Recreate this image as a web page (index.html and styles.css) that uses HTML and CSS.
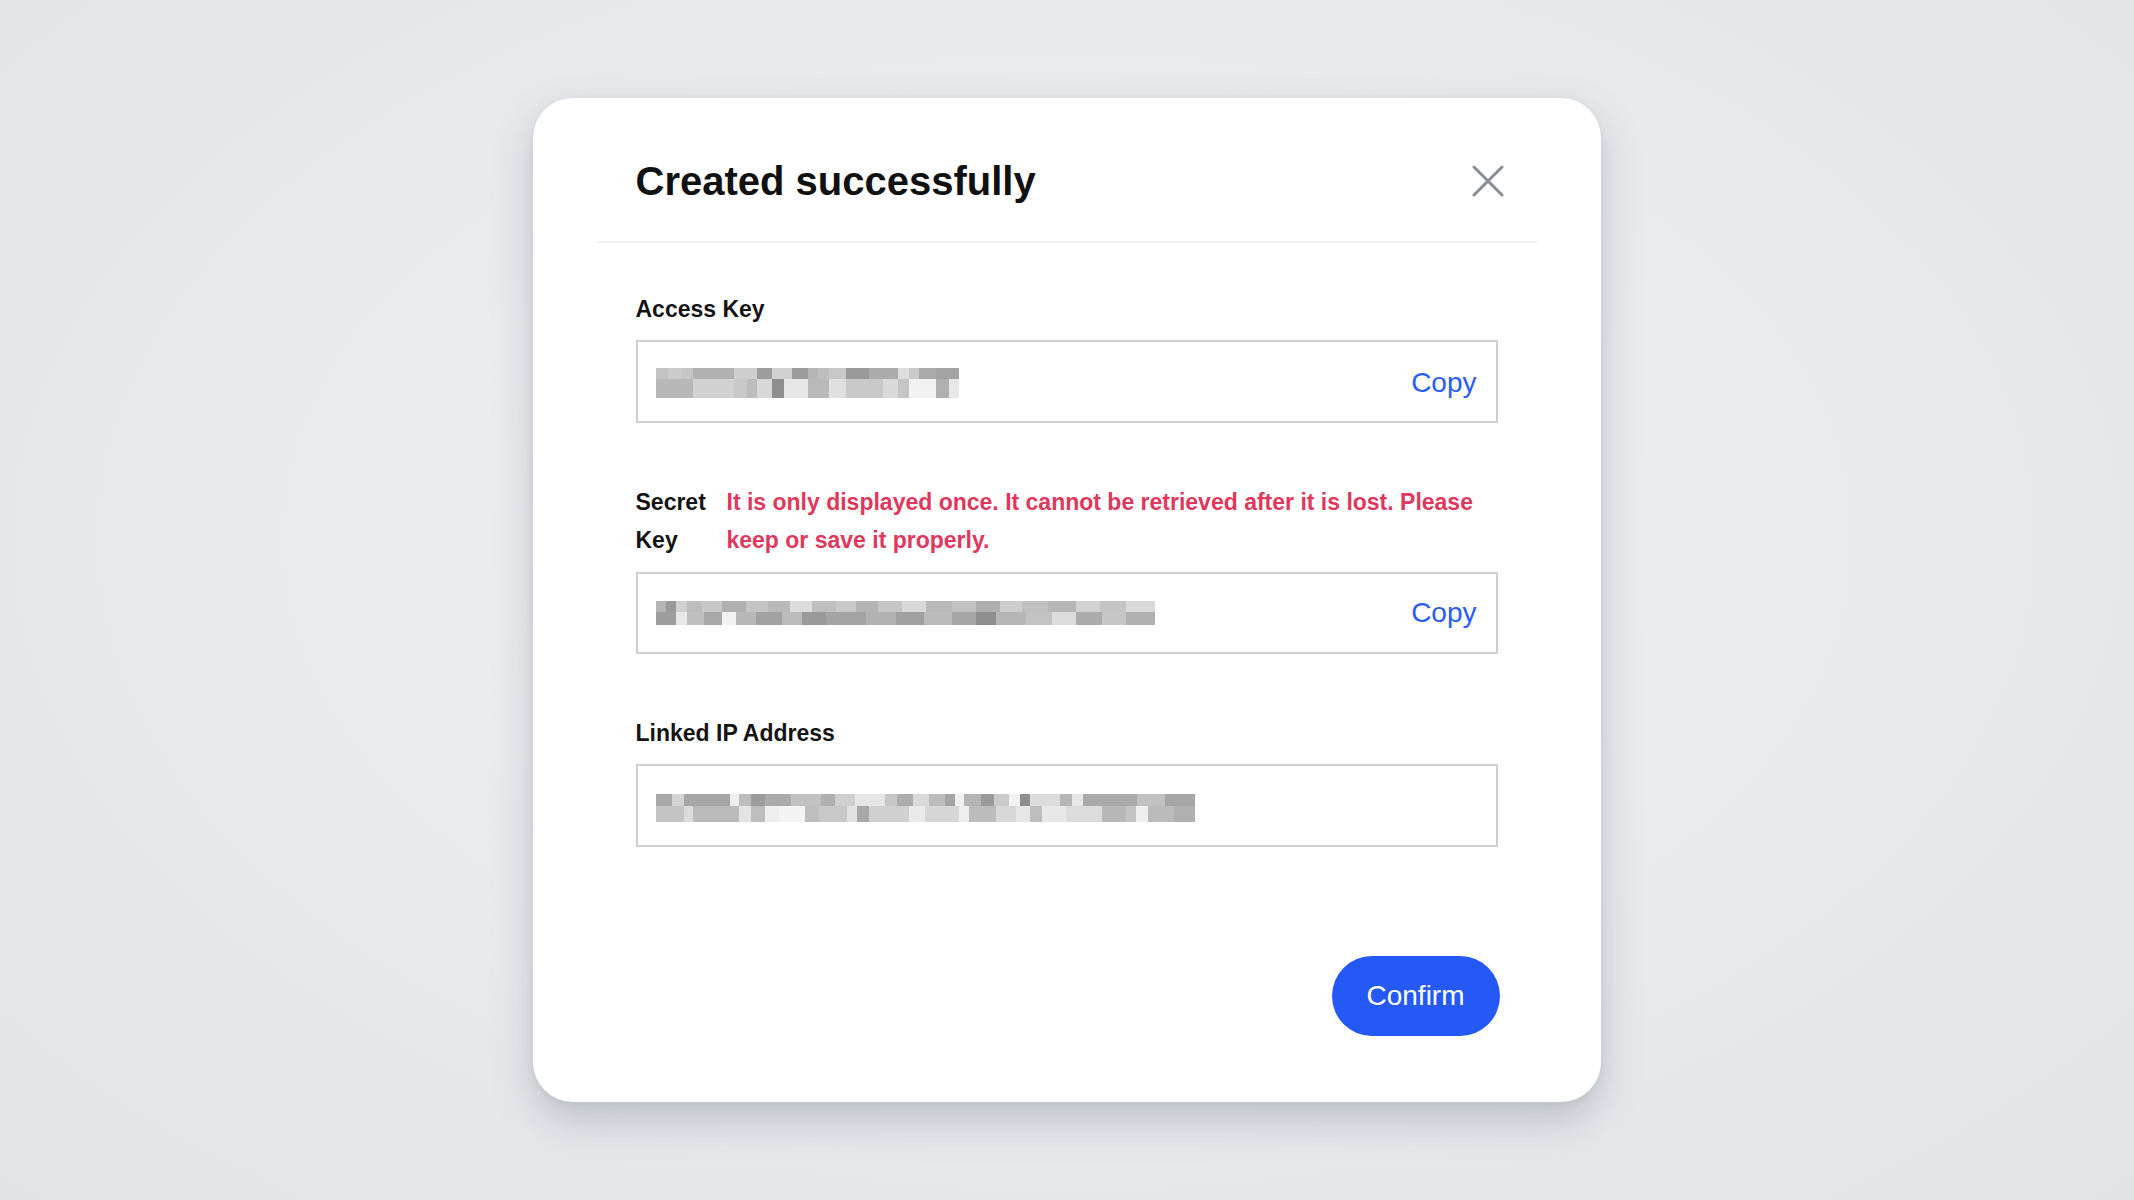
FILE: index.html
```html
<!DOCTYPE html>
<html lang="en">
<head>
    <meta charset="UTF-8">
    <title>Created successfully</title>
    <link rel="stylesheet" href="styles.css">
</head>
<body>
    <div class="modal">
        <header class="modal-header">
            <h2 class="modal-title">Created successfully</h2>
            <button class="close-btn" aria-label="Close">
                <svg width="32" height="32" viewBox="0 0 32 32">
                    <path d="M2 2 L30 30 M30 2 L2 30" stroke="#878c96" stroke-width="3" stroke-linecap="round" fill="none"/>
                </svg>
            </button>
        </header>

        <div class="modal-body">
            <section class="field field-access">
                <label class="field-label">Access Key</label>
                <div class="field-box">
                    <!-- masked value -->
                    <svg class="mask" width="303" height="30" viewBox="0 0 303 30" shape-rendering="crispEdges">
                        <rect x="0" y="0" width="12" height="11" fill="#c2c2c2"/>
                        <rect x="12" y="0" width="14" height="11" fill="#cbcbcb"/>
                        <rect x="26" y="0" width="11" height="11" fill="#c6c6c6"/>
                        <rect x="37" y="0" width="41" height="11" fill="#b1b1b1"/>
                        <rect x="78" y="0" width="23" height="11" fill="#cecece"/>
                        <rect x="101" y="0" width="15" height="11" fill="#9e9e9e"/>
                        <rect x="116" y="0" width="20" height="11" fill="#d1d1d1"/>
                        <rect x="136" y="0" width="16" height="11" fill="#9c9c9c"/>
                        <rect x="152" y="0" width="10" height="11" fill="#b6b6b6"/>
                        <rect x="162" y="0" width="11" height="11" fill="#bebebe"/>
                        <rect x="173" y="0" width="17" height="11" fill="#c8c8c8"/>
                        <rect x="190" y="0" width="23" height="11" fill="#9a9a9a"/>
                        <rect x="213" y="0" width="29" height="11" fill="#ababab"/>
                        <rect x="242" y="0" width="11" height="11" fill="#dddddd"/>
                        <rect x="253" y="0" width="10" height="11" fill="#c9c9c9"/>
                        <rect x="263" y="0" width="17" height="11" fill="#aaaaaa"/>
                        <rect x="280" y="0" width="23" height="11" fill="#a3a3a3"/>
                        <rect x="0" y="11" width="37" height="19" fill="#b8b8b8"/>
                        <rect x="37" y="11" width="41" height="19" fill="#d2d2d2"/>
                        <rect x="78" y="11" width="13" height="19" fill="#c9c9c9"/>
                        <rect x="91" y="11" width="10" height="19" fill="#bdbdbd"/>
                        <rect x="101" y="11" width="15" height="19" fill="#d8d8d8"/>
                        <rect x="116" y="11" width="12" height="19" fill="#8e8e8e"/>
                        <rect x="128" y="11" width="24" height="19" fill="#e6e6e6"/>
                        <rect x="152" y="11" width="21" height="19" fill="#b9b9b9"/>
                        <rect x="173" y="11" width="17" height="19" fill="#e0e0e0"/>
                        <rect x="190" y="11" width="37" height="19" fill="#c8c8c8"/>
                        <rect x="227" y="11" width="15" height="19" fill="#dadada"/>
                        <rect x="242" y="11" width="11" height="19" fill="#c5c5c5"/>
                        <rect x="253" y="11" width="27" height="19" fill="#f2f2f2"/>
                        <rect x="280" y="11" width="13" height="19" fill="#b0b0b0"/>
                        <rect x="293" y="11" width="10" height="19" fill="#e8e8e8"/>
                    </svg>
                    <a class="copy-link" href="#">Copy</a>
                </div>
            </section>

            <section class="field field-secret">
                <div class="field-label-row">
                    <label class="field-label secret-label">Secret Key</label>
                    <p class="warning">It is only displayed once. It cannot be retrieved after it is lost. Please keep or save it properly.</p>
                </div>
                <div class="field-box">
                    <svg class="mask" width="499" height="24" viewBox="0 0 499 24" shape-rendering="crispEdges">
                        <rect x="0" y="0" width="10" height="11" fill="#b5b5b5"/>
                        <rect x="10" y="0" width="10" height="11" fill="#9a9a9a"/>
                        <rect x="20" y="0" width="11" height="11" fill="#d0d0d0"/>
                        <rect x="31" y="0" width="15" height="11" fill="#bdbdbd"/>
                        <rect x="46" y="0" width="20" height="11" fill="#c8c8c8"/>
                        <rect x="66" y="0" width="24" height="11" fill="#b0b0b0"/>
                        <rect x="90" y="0" width="22" height="11" fill="#c4c4c4"/>
                        <rect x="112" y="0" width="22" height="11" fill="#b9b9b9"/>
                        <rect x="134" y="0" width="22" height="11" fill="#dcdcdc"/>
                        <rect x="156" y="0" width="24" height="11" fill="#bfbfbf"/>
                        <rect x="180" y="0" width="20" height="11" fill="#c9c9c9"/>
                        <rect x="200" y="0" width="22" height="11" fill="#b4b4b4"/>
                        <rect x="222" y="0" width="24" height="11" fill="#c6c6c6"/>
                        <rect x="246" y="0" width="24" height="11" fill="#d8d8d8"/>
                        <rect x="270" y="0" width="26" height="11" fill="#b8b8b8"/>
                        <rect x="296" y="0" width="24" height="11" fill="#c2c2c2"/>
                        <rect x="320" y="0" width="24" height="11" fill="#aeaeae"/>
                        <rect x="344" y="0" width="22" height="11" fill="#cdcdcd"/>
                        <rect x="366" y="0" width="26" height="11" fill="#c0c0c0"/>
                        <rect x="392" y="0" width="28" height="11" fill="#b6b6b6"/>
                        <rect x="420" y="0" width="24" height="11" fill="#d2d2d2"/>
                        <rect x="444" y="0" width="26" height="11" fill="#c4c4c4"/>
                        <rect x="470" y="0" width="29" height="11" fill="#dadada"/>
                        <rect x="0" y="11" width="20" height="13" fill="#9e9e9e"/>
                        <rect x="20" y="11" width="11" height="13" fill="#e8e8e8"/>
                        <rect x="31" y="11" width="17" height="13" fill="#c0c0c0"/>
                        <rect x="48" y="11" width="18" height="13" fill="#a8a8a8"/>
                        <rect x="66" y="11" width="14" height="13" fill="#f2f2f2"/>
                        <rect x="80" y="11" width="20" height="13" fill="#b8b8b8"/>
                        <rect x="100" y="11" width="26" height="13" fill="#a2a2a2"/>
                        <rect x="126" y="11" width="20" height="13" fill="#bcbcbc"/>
                        <rect x="146" y="11" width="24" height="13" fill="#9a9a9a"/>
                        <rect x="170" y="11" width="40" height="13" fill="#a4a4a4"/>
                        <rect x="210" y="11" width="30" height="13" fill="#b2b2b2"/>
                        <rect x="240" y="11" width="28" height="13" fill="#a0a0a0"/>
                        <rect x="268" y="11" width="28" height="13" fill="#bbbbbb"/>
                        <rect x="296" y="11" width="24" height="13" fill="#a6a6a6"/>
                        <rect x="320" y="11" width="20" height="13" fill="#8e8e8e"/>
                        <rect x="340" y="11" width="30" height="13" fill="#b6b6b6"/>
                        <rect x="370" y="11" width="26" height="13" fill="#c2c2c2"/>
                        <rect x="396" y="11" width="24" height="13" fill="#dcdcdc"/>
                        <rect x="420" y="11" width="26" height="13" fill="#ababab"/>
                        <rect x="446" y="11" width="24" height="13" fill="#c6c6c6"/>
                        <rect x="470" y="11" width="29" height="13" fill="#b0b0b0"/>
                    </svg>
                    <a class="copy-link" href="#">Copy</a>
                </div>
            </section>

            <section class="field field-ip">
                <label class="field-label">Linked IP Address</label>
                <div class="field-box">
                    <svg class="mask" width="539" height="28" viewBox="0 0 539 28" shape-rendering="crispEdges">
                        <rect x="0" y="0" width="16" height="12" fill="#a8a8a8"/>
                        <rect x="16" y="0" width="12" height="12" fill="#d4d4d4"/>
                        <rect x="28" y="0" width="46" height="12" fill="#a6a6a6"/>
                        <rect x="74" y="0" width="9" height="12" fill="#eeeeee"/>
                        <rect x="83" y="0" width="12" height="12" fill="#bdbdbd"/>
                        <rect x="95" y="0" width="14" height="12" fill="#9c9c9c"/>
                        <rect x="109" y="0" width="26" height="12" fill="#ababab"/>
                        <rect x="135" y="0" width="30" height="12" fill="#c2c2c2"/>
                        <rect x="165" y="0" width="14" height="12" fill="#b0b0b0"/>
                        <rect x="179" y="0" width="20" height="12" fill="#cfcfcf"/>
                        <rect x="199" y="0" width="30" height="12" fill="#e6e6e6"/>
                        <rect x="229" y="0" width="12" height="12" fill="#c6c6c6"/>
                        <rect x="241" y="0" width="16" height="12" fill="#adadad"/>
                        <rect x="257" y="0" width="16" height="12" fill="#dadada"/>
                        <rect x="273" y="0" width="16" height="12" fill="#bcbcbc"/>
                        <rect x="289" y="0" width="10" height="12" fill="#a4a4a4"/>
                        <rect x="299" y="0" width="9" height="12" fill="#f0f0f0"/>
                        <rect x="308" y="0" width="17" height="12" fill="#b4b4b4"/>
                        <rect x="325" y="0" width="13" height="12" fill="#9a9a9a"/>
                        <rect x="338" y="0" width="15" height="12" fill="#cacaca"/>
                        <rect x="353" y="0" width="11" height="12" fill="#f2f2f2"/>
                        <rect x="364" y="0" width="10" height="12" fill="#8e8e8e"/>
                        <rect x="374" y="0" width="30" height="12" fill="#dcdcdc"/>
                        <rect x="404" y="0" width="12" height="12" fill="#b6b6b6"/>
                        <rect x="416" y="0" width="11" height="12" fill="#e8e8e8"/>
                        <rect x="427" y="0" width="54" height="12" fill="#aaaaaa"/>
                        <rect x="481" y="0" width="28" height="12" fill="#c2c2c2"/>
                        <rect x="509" y="0" width="30" height="12" fill="#a6a6a6"/>
                        <rect x="0" y="12" width="28" height="16" fill="#c4c4c4"/>
                        <rect x="28" y="12" width="9" height="16" fill="#dcdcdc"/>
                        <rect x="37" y="12" width="46" height="16" fill="#bababa"/>
                        <rect x="83" y="12" width="12" height="16" fill="#e4e4e4"/>
                        <rect x="95" y="12" width="14" height="16" fill="#bdbdbd"/>
                        <rect x="109" y="12" width="14" height="16" fill="#eeeeee"/>
                        <rect x="123" y="12" width="26" height="16" fill="#f4f4f4"/>
                        <rect x="149" y="12" width="14" height="16" fill="#bfbfbf"/>
                        <rect x="163" y="12" width="28" height="16" fill="#c8c8c8"/>
                        <rect x="191" y="12" width="10" height="16" fill="#e2e2e2"/>
                        <rect x="201" y="12" width="12" height="16" fill="#a8a8a8"/>
                        <rect x="213" y="12" width="40" height="16" fill="#d0d0d0"/>
                        <rect x="253" y="12" width="16" height="16" fill="#eaeaea"/>
                        <rect x="269" y="12" width="34" height="16" fill="#d6d6d6"/>
                        <rect x="303" y="12" width="10" height="16" fill="#eeeeee"/>
                        <rect x="313" y="12" width="27" height="16" fill="#bcbcbc"/>
                        <rect x="340" y="12" width="20" height="16" fill="#d8d8d8"/>
                        <rect x="360" y="12" width="14" height="16" fill="#e6e6e6"/>
                        <rect x="374" y="12" width="12" height="16" fill="#bdbdbd"/>
                        <rect x="386" y="12" width="24" height="16" fill="#e8e8e8"/>
                        <rect x="410" y="12" width="36" height="16" fill="#dcdcdc"/>
                        <rect x="446" y="12" width="24" height="16" fill="#b8b8b8"/>
                        <rect x="470" y="12" width="10" height="16" fill="#c4c4c4"/>
                        <rect x="480" y="12" width="12" height="16" fill="#efefef"/>
                        <rect x="492" y="12" width="26" height="16" fill="#bbbbbb"/>
                        <rect x="518" y="12" width="21" height="16" fill="#b0b0b0"/>
                    </svg>
                </div>
            </section>
        </div>

        <footer class="modal-footer">
            <button class="confirm-btn">Confirm</button>
        </footer>
    </div>
</body>
</html>
```

FILE: styles.css
```css
:root {
    --text-color: #141414;
    --border-color: #cfcfcf;
    --link-color: #2a5cf6;
    --primary-color: #2459f6;
    --danger-color: #e0385c;
    --divider-color: #eff0f4;
}

* {
    box-sizing: border-box;
    margin: 0;
    padding: 0;
}

html, body {
    height: 100%;
}

body {
    font-family: 'Liberation Sans', Arial, Helvetica, sans-serif;
    color: var(--text-color);
    background: radial-gradient(ellipse at 50% 45%, #eef0f2 0%, #e8eaed 55%, #e1e4e7 100%);
    display: flex;
    justify-content: center;
    align-items: flex-start;
    overflow: hidden;
}

.modal {
    width: 1068px;
    height: 1004px;
    margin-top: 98px;
    margin-left: -1px;
    background: #fff;
    border-radius: 40px;
    padding: 0 64px;
    display: flex;
    flex-direction: column;
    box-shadow: 0 18px 40px rgba(70, 80, 100, 0.26), 0 2px 8px rgba(0, 0, 0, 0.05);
}

.modal-header {
    display: flex;
    align-items: center;
    justify-content: space-between;
    padding: 59px 33px 36px 39px;
    border-bottom: 2px solid var(--divider-color);
}

.modal-title {
    font-size: 40px;
    line-height: 48px;
    font-weight: bold;
    color: #111;
}

.close-btn {
    background: none;
    border: none;
    width: 32px;
    height: 32px;
    cursor: pointer;
    display: flex;
}

.modal-body {
    padding: 0 39px;
}

.field-label {
    display: block;
    font-size: 23px;
    line-height: 28px;
    font-weight: 600;
}

.field-access {
    margin-top: 52px;
}

.field-secret {
    margin-top: 60px;
}

.field-ip {
    margin-top: 65px;
}

.field-label-row {
    display: flex;
    gap: 19px;
    font-size: 23px;
    line-height: 38px;
    font-weight: 600;
}

.secret-label {
    width: 72px;
    flex: 0 0 72px;
    line-height: 38px;
}

.warning {
    flex: 1;
    color: var(--danger-color);
}

.field-box {
    height: 83px;
    border: 2px solid var(--border-color);
    display: flex;
    align-items: center;
    justify-content: space-between;
    padding: 3px 19px 0 18px;
    margin-top: 17px;
}

.field-secret .field-box {
    margin-top: 13px;
    height: 82px;
    padding-top: 0;
}

.field-ip .field-box {
    margin-top: 17px;
    padding-top: 4px;
}

.mask {
    display: block;
}

.copy-link {
    color: var(--link-color);
    font-size: 28px;
    text-decoration: none;
}

.modal-footer {
    margin-top: auto;
    padding: 0 37px 66px 0;
    display: flex;
    justify-content: flex-end;
}

.confirm-btn {
    width: 168px;
    height: 80px;
    border: none;
    border-radius: 40px;
    background-color: var(--primary-color);
    color: #fff;
    font-family: inherit;
    font-size: 28px;
    cursor: pointer;
}
```
